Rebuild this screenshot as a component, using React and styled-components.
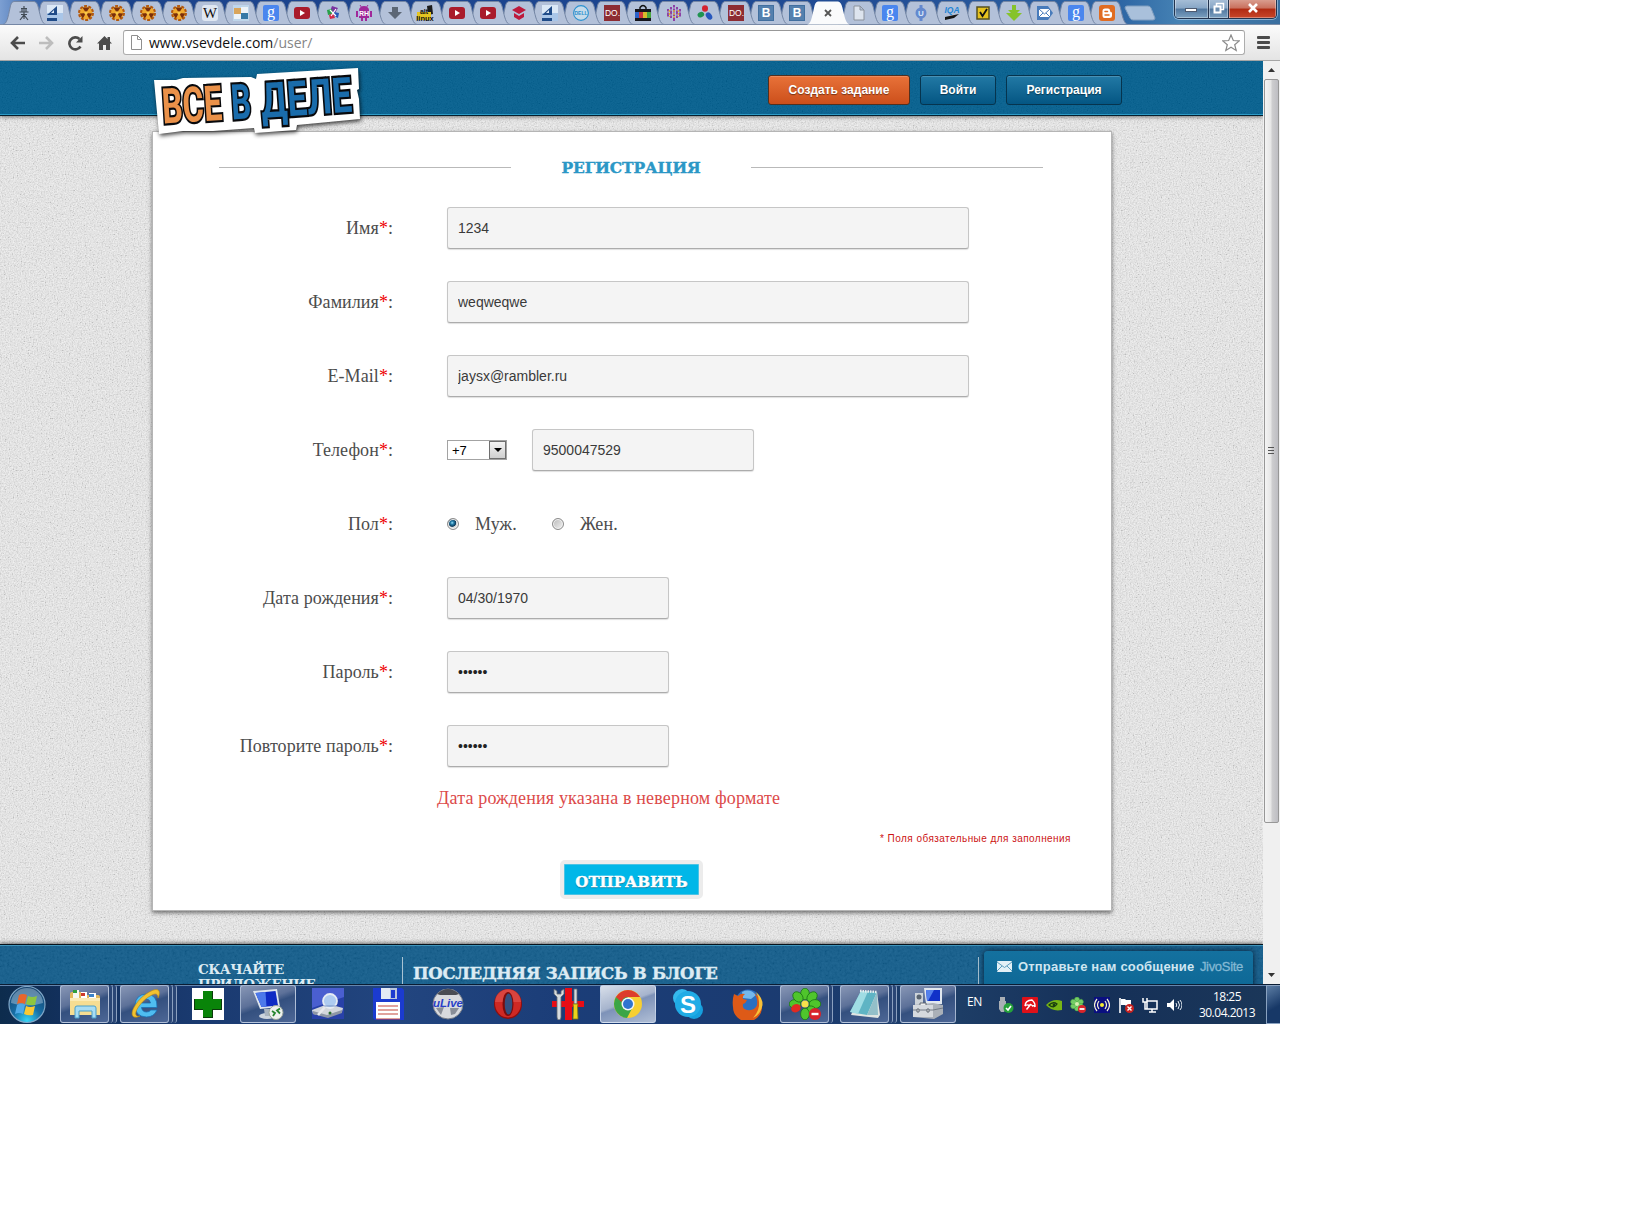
import React from "react";
import styled, { createGlobalStyle, css } from "styled-components";

const noise = (alpha, freq) =>
  `url("data:image/svg+xml,${encodeURIComponent(
    `<svg xmlns='http://www.w3.org/2000/svg' width='320' height='320'><filter id='n' x='0' y='0' width='100%' height='100%'><feTurbulence type='fractalNoise' baseFrequency='${freq}' numOctaves='3' seed='4' stitchTiles='stitch'/><feColorMatrix values='1.6 0 0 0 -.3 1.6 0 0 0 -.3 1.6 0 0 0 -.3 0 0 0 0 ${alpha}'/></filter><rect width='320' height='320' filter='url(#n)'/></svg>`
  )}")`;

const serif = `"Liberation Serif", "Times New Roman", serif`;
const sans = `"Liberation Sans", Arial, sans-serif`;
const slab = `"DejaVu Serif", serif`;
const ui = `"Open Sans", "Noto Sans", sans-serif`;

const GlobalStyle = createGlobalStyle`
  * { box-sizing: border-box; }
  body { margin: 0; background: #fff; }
  svg { display: block; flex: none; }
`;

const Desktop = styled.div`
  width: 1280px;
  height: 1024px;
  display: flex;
  flex-direction: column;
  overflow: hidden;
`;

/* ---------- browser frame ---------- */

const TabStrip = styled.div`
  height: 25px;
  flex: none;
  display: flex;
  padding-left: 8.5px;
  position: relative;
  background: linear-gradient(90deg, #7c9fd2 0, #3c69ae 35px, #1b438c 130px, #1c4590 640px, #234f96 900px, #2e66a4 1120px, #4582b4 1180px, #3a6f9f 1280px);
  box-shadow: inset 0 -1px 0 #7d8da6;
`;

const TabSlot = styled.div`
  width: 30.94px;
  flex: none;
  height: 25px;
  position: relative;
  z-index: ${(p) => p.$z};
  display: flex;
  justify-content: center;
  padding-top: 5px;
`;

const TabShape = styled.svg`
  position: absolute;
  left: -6px;
  top: 0;
  z-index: -1;
  overflow: visible;
`;

const NewTab = styled.svg`
  margin: 5px 0 0 2px;
`;

const WindowControls = styled.div`
  position: absolute;
  right: 3px;
  top: 0;
  width: 103px;
  height: 19px;
  display: flex;
  border: 1px solid #22344f;
  border-top: 0;
  border-radius: 0 0 5px 5px;
  overflow: hidden;
  box-shadow: 0 0 0 1px rgba(200, 225, 245, 0.55);
`;

const ControlButton = styled.div`
  width: ${(p) => p.$w}px;
  display: flex;
  align-items: center;
  justify-content: center;
  padding-bottom: ${(p) => p.$lift || 0}px;
  border-right: ${(p) => (p.$close ? 0 : "1px solid #22344f")};
  box-shadow: inset 1px 0 0 rgba(255, 255, 255, 0.4), inset -1px -1px 0 rgba(255, 255, 255, 0.35);
  background: ${(p) =>
    p.$close
      ? "linear-gradient(#d99c8e 0, #c9705d 45%, #b02a12 50%, #c8462a 100%)"
      : "linear-gradient(#a5bdd6 0, #87a6c6 45%, #50779f 50%, #7ba0c0 100%)"};
`;

const Toolbar = styled.div`
  height: 36px;
  flex: none;
  display: flex;
  align-items: center;
  padding: 0 10px 0 9px;
  background: linear-gradient(#fbfbfb, #e4e4e4);
  border-bottom: 1px solid #a5a5a5;
`;

const NavIcon = styled.svg`
  margin-right: 12px;
`;

const Omnibox = styled.div`
  width: 1122px;
  height: 25px;
  margin-left: -2px;
  display: flex;
  align-items: center;
  padding: 0 4px 0 6px;
  border: 1px solid #adadad;
  border-top-color: #989898;
  border-radius: 3px;
  background: #fff;
`;

const Url = styled.div`
  flex: 1;
  margin-left: 6px;
  font: 14px/22px ${ui};
  color: #111;
  span { color: #858585; }
`;

const MenuBars = styled.div`
  width: 13px;
  height: 13px;
  margin-left: 12px;
  display: flex;
  flex-direction: column;
  justify-content: space-between;
  i { height: 3px; border-radius: 1px; background: #4b4b4b; }
`;

/* ---------- site ---------- */

const Viewport = styled.div`
  height: 923px;
  flex: none;
  display: flex;
`;

const Page = styled.div`
  width: 1263px;
  height: 923px;
  display: flex;
  flex-direction: column;
  overflow: hidden;
  background: ${noise(0.2, 0.75)}, #ececec;
`;

const SiteHeader = styled.header`
  height: 55px;
  flex: none;
  position: relative;
  display: flex;
  justify-content: flex-end;
  align-items: flex-start;
  gap: 10px;
  padding: 14px 141px 0 0;
  background: ${noise(0.06, 0.8)}, #025f8e;
  border-bottom: 1px solid #04202f;
  box-shadow: inset 0 -1px 0 #2c9ac6, 0 1px 4px rgba(0, 0, 0, 0.5);
`;

const Logo = styled.svg`
  position: absolute;
  left: 151px;
  top: 4px;
  z-index: 2;
  overflow: visible;
  filter: drop-shadow(1px 2px 2px rgba(0, 0, 0, 0.75));
`;

const HeaderButton = styled.button`
  width: ${(p) => p.$w}px;
  height: 30px;
  padding: 0 0 1px;
  border: 1px solid ${(p) => (p.$primary ? "#52301f" : "#06344e")};
  border-radius: 3px;
  color: #fff;
  font: bold 12px ${sans};
  text-shadow: 0 1px 1px rgba(0, 0, 0, 0.45);
  box-shadow: inset 0 1px 0 rgba(255, 255, 255, 0.18);
  background: ${(p) =>
    p.$primary ? "linear-gradient(#e87239, #cc4f1b)" : "linear-gradient(#2279a5, #045683)"};
`;

const Card = styled.main`
  width: 960px;
  height: 780px;
  flex: none;
  margin: 15px 0 0 152px;
  border: 1px solid #b5b5b5;
  background: #fff;
  box-shadow: 0 2px 4px rgba(0, 0, 0, 0.5);
`;

const Heading = styled.div`
  height: 75px;
  padding: 0 68px 4px 66px;
  display: flex;
  align-items: center;
  justify-content: space-between;
`;

const Rule = styled.div`
  width: 292px;
  height: 1px;
  background: #b9b9b9;
`;

const Title = styled.h1`
  margin: 0;
  font: bold 15.5px/20px ${slab};
  letter-spacing: -0.1px;
  color: #2b97c6;
  -webkit-text-stroke: 0.4px #2b97c6;
`;

const Row = styled.div`
  height: 74px;
  display: flex;
  align-items: flex-start;
`;

const Label = styled.label`
  width: 240px;
  flex: none;
  margin-right: 54px;
  text-align: right;
  font: 18px/42px ${serif};
  letter-spacing: 0.06px;
  white-space: nowrap;
  color: #4c4c4c;
  span { color: #e00; }
`;

const Field = styled.input`
  width: ${(p) => (p.$wide ? 522 : 222)}px;
  height: 42px;
  padding: 0 10px;
  border: 1px solid #c6c6c6;
  border-bottom-color: #acacac;
  border-radius: 3px;
  background: #f4f4f4;
  font: 14px ${sans};
  color: #3a3a3a;
  outline: 0;
  box-shadow: 0 1px 1px rgba(0, 0, 0, 0.13);
  &[type="password"] { color: #222; }
`;

const CodeSelect = styled.div`
  width: 60px;
  height: 20px;
  margin: 11px 25px 0 0;
  display: flex;
  justify-content: space-between;
  border: 1px solid #a3a3a3;
  background: #fff;
  padding-left: 4px;
  font: 13px/19px ${sans};
  color: #000;
`;

const SelectArrow = styled.div`
  width: 17px;
  height: 18px;
  display: flex;
  align-items: center;
  justify-content: center;
  border: 1px solid #6f6f6f;
  background: linear-gradient(#f3f3f3, #cfcfcf);
`;

const RadioOption = styled.div`
  display: flex;
  align-items: center;
  width: 105px;
  height: 42px;
  gap: 16px;
  font: 18px ${serif};
  letter-spacing: 0.15px;
  color: #4c4c4c;
  span { padding-top: 1px; }
`;

const Radio = styled.div`
  width: 12px;
  height: 12px;
  border-radius: 50%;
  border: 1px solid #8b8b8b;
  box-shadow: inset 0 0 0 1px #f4f4f4;
  background: ${(p) =>
    p.$on
      ? "radial-gradient(circle at 42% 38%, #9fe0f7 0, #2580ac 1.6px, #0c3a5a 3.6px, #dcdcdc 4.4px)"
      : "linear-gradient(135deg, #b9b9b9, #f2f2f2)"};
`;

const ErrorText = styled.div`
  height: 41px;
  margin: -12px 0 0 284px;
  font: 18px/22px ${serif};
  letter-spacing: 0.17px;
  color: #dc4a4a;
`;

const Note = styled.div`
  height: 31px;
  padding: 4px 40px 0 0;
  text-align: right;
  font: 10px/14px ${sans};
  letter-spacing: 0.45px;
  color: #cc1313;
`;

const Submit = styled.button`
  display: block;
  width: 143px;
  height: 39px;
  margin: 1px 0 0 407px;
  padding: 5px 0 0;
  border: 4px solid #ececec;
  border-radius: 5px;
  background: #00b7e8;
  box-shadow: inset 0 0 0 1px #4cc3e4;
  color: #fff;
  font: bold 15px/20px ${slab};
  -webkit-text-stroke: 0.4px #fff;
  text-shadow: 0 1px 1px #04678b;
`;

const Footer = styled.footer`
  height: 40px;
  flex: none;
  margin-top: auto;
  display: flex;
  align-items: flex-start;
  overflow: hidden;
  border-top: 1px solid #06121c;
  background: ${noise(0.07, 0.4)}, #105b8b;
  box-shadow: inset 0 1px 0 #3f94bb, 0 -1px 4px rgba(0, 0, 0, 0.55);
  color: #dcebf3;
`;

const FooterApps = styled.div`
  width: 204px;
  margin: 17px 0 0 198px;
  font: bold 13.5px/15px ${slab};
  letter-spacing: -0.6px;
  white-space: pre-line;
`;

const FooterBlog = styled.div`
  width: 577px;
  height: 40px;
  margin-top: 12px;
  padding: 7px 0 0 10px;
  border-left: 1px solid #a8c3d3;
  border-right: 1px solid #a8c3d3;
  font: bold 16.5px/20px ${slab};
  letter-spacing: -0.27px;
  -webkit-text-stroke: 0.4px #dcebf3;
  white-space: nowrap;
`;

const Jivo = styled.div`
  width: 269px;
  height: 40px;
  margin: 6px 0 0 5px;
  padding: 0 10px 9px 13px;
  display: flex;
  align-items: center;
  border-radius: 4px 4px 0 0;
  background: linear-gradient(#14719f, #0d6795);
  box-shadow: 0 0 6px rgba(0, 20, 40, 0.9);
  white-space: nowrap;
  font: bold 13px ${sans};
  color: #cfe6f1;
  b { flex: 1; margin-left: 6px; letter-spacing: 0.18px; }
  em { font-style: normal; font-weight: normal; letter-spacing: -0.3px; color: #84b9d4; -webkit-text-stroke: 0.3px #84b9d4; }
`;

const Scrollbar = styled.div`
  width: 17px;
  display: flex;
  flex-direction: column;
  align-items: flex-start;
  background: #f0f0f0;
`;

const ScrollArrow = styled.div`
  width: 17px;
  height: 18px;
  display: flex;
  align-items: center;
  justify-content: center;
`;

const ScrollTrack = styled.div`
  flex: 1;
  padding-left: 1px;
`;

const Thumb = styled.div`
  width: 15px;
  height: 744px;
  display: flex;
  align-items: center;
  justify-content: center;
  padding: 0 2px 2px 0;
  border: 1px solid #979797;
  border-radius: 2px;
  background: linear-gradient(90deg, #f4f4f4, #e6e6e6 45%, #cdcdcf 55%, #bdbdc2);
`;

/* ---------- taskbar ---------- */

const Taskbar = styled.div`
  height: 40px;
  flex: none;
  display: flex;
  overflow: hidden;
  border-top: 1px solid #0a1c33;
  box-shadow: inset 0 1px 0 #6486ae;
  background: linear-gradient(90deg, #0d2c4d 0, #12305c 60px, #1a3a70 200px, #22457f 400px, #1b3d78 560px, #1b3b70 800px, #1d3d66 960px, #153058 1100px, #1b3759 1280px);
`;

const StartSlot = styled.div`
  width: 60px;
  display: flex;
  padding: 1px 0 0 8px;
`;

const TaskSlot = styled.div`
  width: 60px;
  flex: none;
  display: flex;
`;

const glass = css`
  border: 1px solid rgba(215, 228, 245, 0.65);
  border-radius: 3px;
  background: ${(p) =>
    p.$active
      ? "linear-gradient(160deg, #d8dfea 0, #a6b4cd 45%, #7d92b8 50%, #b1bfd6 100%)"
      : "linear-gradient(160deg, #8796b5 0, #5d7199 40%, #34507f 52%, #4d6796 100%)"};
`;

const TaskButton = styled.div`
  width: ${(p) => (p.$stack ? 49 : 56)}px;
  height: 38px;
  display: flex;
  align-items: center;
  justify-content: center;
  ${(p) => p.$open && glass}
`;

const StackEdge = styled.div`
  width: 4px;
  height: 38px;
  border-right: 1px solid rgba(205, 220, 240, 0.6);
  border-radius: 0 3px 3px 0;
  background: #2a4675;
`;

const Tray = styled.div`
  display: flex;
  align-items: center;
  gap: 8px;
  margin-left: 16px;
`;

const Lang = styled.div`
  width: 15px;
  margin: 9px 0 0 7px;
  font: 12px/16px ${ui};
  letter-spacing: -0.4px;
  color: #fff;
`;

const Clock = styled.div`
  width: 66px;
  margin: 4px 6px 0 12px;
  text-align: center;
  font: 12px/16px ${ui};
  letter-spacing: -0.5px;
  color: #fff;
`;

const ShowDesktop = styled.div`
  width: 14px;
  margin-left: auto;
  border: 1px solid #8aa2c0;
  border-right: 0;
  background: linear-gradient(150deg, #5c7da4, #173867 60%);
`;

/* ---------- drawings ---------- */

const T = (p) => (
  <text textAnchor="middle" fontFamily="Liberation Sans" fontWeight="bold" {...p} />
);

const favicons = {
  stick: <path d="M8 1v13M5 3.500h6M3.500 7h9M6 3v4M10 3v4M5 9.500h6M4 15l4-5 4 5" stroke="#414b55" strokeWidth="1.2" fill="none" />,
  four: <><rect width="16" height="16" fill="#dbe8f6" /><path d="M0 8h16v8H0z" fill="#a9c6e8" /><path d="M10 1v9H0zM0 13h10v3H0z" fill="#1f4b88" /><path d="M7 5v3H4z" fill="#dbe8f6" /></>,
  rad: <><circle cx="8" cy="8" r="6.6" fill="#f0a92e" /><circle cx="8" cy="8" r="7" fill="none" stroke="#b4590f" strokeWidth="2" strokeDasharray="3 1.4" /><path d="M8 8 4.500 2.500h7zM8 8 1.800 8.600l3 5zM8 8l6.200.6-3 5z" fill="#7a2e0c" /><circle cx="8" cy="8" r="1.7" fill="#f9c848" /></>,
  wiki: <><rect width="16" height="16" rx="3" fill="#dfe7f2" /><text x="8" y="13" textAnchor="middle" fontFamily="Liberation Serif" fontSize="14" fill="#111" textLength="14" lengthAdjust="spacingAndGlyphs">W</text></>,
  squares: <><rect width="16" height="16" fill="#bfd6ea" /><path d="M1 3h7v6H1z" fill="#d9a55b" /><path d="M8 8h7v6H8z" fill="#3679a6" /><path d="M8 2h7v6H8zM1 9h7v5H1z" fill="#edf3f8" /></>,
  google: <><rect width="16" height="16" rx="2" fill="#4a86ee" /><text x="8" y="12" textAnchor="middle" fontFamily="Liberation Serif" fontSize="16" fill="#fff">g</text></>,
  tube: <><rect y="2" width="16" height="12" rx="3" fill="#a91b2b" /><path d="M6 5v6l5-3z" fill="#fff" /></>,
  pinwheel: <><path d="m7 1 6 2-3 5-5-2z" fill="#7b33a0" /><path d="m2 5 5-1 1 5-5 1z" fill="#28a04a" /><path d="m9 7 5 1-1 5-4-2z" fill="#2658b8" /><path d="m4 10 4-2 2 5-5 1z" fill="#d52a4a" /><path d="m5 5 6 6M11 4l-5 7" stroke="#fff" strokeWidth="1.2" /></>,
  droid: <><path d="M3 5a5 4 0 0 1 10 0v8H3zM0 6h2v6H0zM14 6h2v6h-2zM5 13h2v3H5zM9 13h2v3H9z" fill="#a0289a" /><path d="m4 0 2 3M12 0l-2 3" stroke="#a0289a" /><T x="8" y="11" fontSize="7" fill="#fff">RH</T></>,
  down: <path d="M5 2h6v5h4l-7 7-7-7h4z" fill="#5c6775" />,
  linux: <><path d="M9 1l5-1 1 9-5 1z" fill="#1c1c1c" /><rect x="-1" y="7" width="14" height="8" fill="#e5c521" /><T x="6" y="9" fontSize="7" fill="#111">alt</T><T x="7" y="15.5" fontSize="7.5" fill="#111">linux</T></>,
  grad: <path d="m1 5 7-4 7 4-7 4zM3 8l5 3 5-3v4l-5 3-5-3z" fill="#bd1a3c" />,
  dell: <><circle cx="8" cy="8" r="7.4" fill="#c6dbea" stroke="#2b91cf" strokeWidth="1.1" /><T x="8" y="10" fontSize="5" fill="#2b91cf">DELL</T></>,
  doo: <><rect width="16" height="16" fill="#8d2c32" /><text x="8.5" y="11" textAnchor="middle" fontFamily="Liberation Sans" fontSize="8.5" fill="#fff">DO.</text></>,
  bag: <><path d="M5 5V2.500q3-4 6 0V5" fill="none" stroke="#111" strokeWidth="1.4" /><path d="M0 4h16v12H0z" fill="#15151c" /><path d="M0 7h4v6H0z" fill="#2b62c9" /><path d="M4 7h4v6H4z" fill="#c9343c" /><path d="M8 7h4v6H8z" fill="#d9b92b" /><path d="M12 7h4v6h-4z" fill="#4aa53d" /></>,
  dots: <><path d="M2 4v8M5 2v12M8 0v16M11 2v12M14 4v8" stroke="#8b3aa3" strokeWidth="1.9" strokeDasharray="2.5 1 4 1" /><path d="M3.500 5v7M8 5v8M12.500 5v7" stroke="#dfb13a" strokeWidth="1.4" strokeDasharray="2 1" /></>,
  petals: <><ellipse cx="8" cy="3.5" rx="3" ry="3.2" fill="#d42330" /><ellipse cx="3.6" cy="9.5" rx="3.4" ry="2.7" fill="#1f9350" transform="rotate(-25 4 9)" /><ellipse cx="12" cy="11" rx="2.8" ry="4" fill="#2757bd" transform="rotate(-35 12 11)" /></>,
  vk: <><rect width="16" height="16" fill="#416f9f" /><rect x="1" y="1" width="14" height="14" fill="#5480ae" /><T x="8" y="12.3" fontSize="12" fill="#fff">B</T></>,
  close: <path d="m5 5 6 6M11 5l-6 6" stroke="#555" strokeWidth="1.8" />,
  page: <path d="M3 1h6l4 4v10H3zM9 1v4h4" fill="#dde4ee" stroke="#8b929c" />,
  u: <><path d="M8 0v16" stroke="#6489ce" strokeWidth="3" /><circle cx="8" cy="8" r="5.5" fill="#6489ce" /><T x="8" y="11" fontSize="8" fill="#dae6f8">U</T></>,
  iqa: <><text x="8" y="7.5" textAnchor="middle" fontFamily="Liberation Sans" fontWeight="bold" fontStyle="italic" fontSize="8.5" fill="#2486d6">IQA</text><path d="m1 12 14-3-5 4-9 2z" fill="#151515" /></>,
  check: <><rect x="2" y="2" width="12" height="12" fill="#e6c21e" stroke="#545021" strokeWidth="1.5" /><path d="m5 7 2.500 4L12 4" fill="none" stroke="#111" strokeWidth="1.8" /></>,
  green: <path d="M6 0h4v5h4l-3 3h5l-8 8-8-8h5L2 5h4z" fill="#86c32b" />,
  mail: <><path d="M0 1h11l5 7-5 7H0z" fill="#477bbb" /><path d="M2 4h11v8H2z" fill="#fff" /><path d="m2 4 5.500 5L13 4M2 12l4-4M13 12 9 8" stroke="#477bbb" fill="none" /></>,
  blogger: <><rect width="16" height="16" rx="3" fill="#e06c22" /><path d="M6 3.500h3q2 0 2 2t2 2V11q0 2-2.500 2H5.500Q3.500 13 3.500 11V6Q3.500 3.500 6 3.500z" fill="#fff" /><path d="M6 6.500h2.500M6 10h4" stroke="#e06c22" strokeWidth="1.5" strokeLinecap="round" /></>,
};

const tabs = [
  "stick", "four", "rad", "rad", "rad", "rad", "wiki", "squares", "google", "tube", "pinwheel", "droid",
  "down", "linux", "tube", "tube", "grad", "four", "dell", "doo", "bag", "dots", "petals", "doo", "vk", "vk",
  "close", "page", "google", "u", "iqa", "check", "green", "mail", "google", "blogger",
];

function Tab({ kind, index }) {
  const active = kind === "close";
  return (
    <TabSlot $z={active ? 50 : 40 - index}>
      <TabShape width="43" height="25">
        <path
          d="M0 24.500C4 24 5 17 7 8Q8 1.500 11 1.500H31Q34 1.500 35.500 8C37.500 17 39 24 43 24.500z"
          fill={active ? "#fafbfc" : "#b3c1d9"}
          stroke={active ? "none" : "#7587a5"}
        />
      </TabShape>
      <svg width="16" height="16" viewBox="0 0 16 16" overflow="visible">{favicons[kind]}</svg>
    </TabSlot>
  );
}

const taskIcons = {
  explorer: (
    <>
      <path d="M1 6q0-2 2-2h9l2 3h15q2 0 2 2v18H1z" fill="#e2b95c" />
      <path d="M4 2h6v8H4z" fill="#f4f7f4" /><path d="M4 2h4v3H4z" fill="#2f9d3c" />
      <path d="M12 4h6v7h-6z" fill="#fff" /><path d="M12 5h4v3h-4z" fill="#cf3a2b" />
      <path d="M20 5h7v6h-7z" fill="#fff" /><path d="M20 6h5v3h-5z" fill="#3b83c9" />
      <path d="M1 10h30v17H1z" fill="#f6dd92" /><path d="M1 10h30v3H1z" fill="#fbebb5" />
      <path d="M6 30V20q0-2 2-2h17q2 0 2 2v10h-4v-7H10v7z" fill="#a6dcf4" stroke="#4a9fc9" />
    </>
  ),
  ie: (
    <>
      <path d="M28 19.500H12.500q.8 4.500 5 4.500 3 0 4.300-2H28Q25 29 17.500 29 6 28.500 6 17.500 6.500 6.500 17.500 6 28.500 6.500 28 19.500zM12.500 15h9q-.6-4-4.500-4-3.800 0-4.500 4z" fill="#4fbdf0" stroke="#1b6fb3" strokeWidth=".8" fillRule="evenodd" />
      <path d="M5 29C-1 26 8 12 17 6c6-4 11-6 13-3 1 2 0 5-1 7 0-4-2-5-6-3C14 11 5 23 7 27q1 2 4 1-3 2-6 1z" fill="#f2c230" stroke="#b98512" strokeWidth=".6" />
    </>
  ),
  cross: <><rect width="32" height="32" fill="#fff" /><path d="M11 3h10v8h9v11h-9v8H11v-8H2V11h9z" fill="#0b3a0b" /><path d="M11 3h9v8h9v10h-9v8h-9v-8H3V11h8z" fill="#098409" /></>,
  remote: (
    <>
      <ellipse cx="15" cy="28" rx="8" ry="3" fill="#cdd5dd" /><path d="M12 21h6l2 7h-7z" fill="#a9b4bf" />
      <path d="m1 3 24-2 3 18-20 2z" fill="#dfe6ee" /><path d="m3.500 5 20-2 2.500 14.500-16.500 1.500z" fill="#0e2bc4" /><path d="m3.500 5 10-1 1 14.500-5 .5z" fill="#4c79ea" />
      <circle cx="24" cy="24.500" r="7" fill="#eef1ee" stroke="#9aa49a" /><path d="m20 23 3 2-2 3M28 20.500l-3 2 3 3" stroke="#27862f" strokeWidth="1.800" fill="none" />
    </>
  ),
  search: (
    <>
      <rect width="32" height="31" fill="#2841a8" /><path d="M0 0h32v9L0 20z" fill="#4a5fd0" />
      <path d="m0 22 16-6 15 4-1 4-14 5-15-3z" fill="#d2d6dc" /><path d="m1 23 14 4 15-5v3l-14 5-15-4z" fill="#8d96a5" />
      <circle cx="18" cy="13" r="7" fill="#aecbf0" stroke="#e6ecf4" strokeWidth="1.800" /><path d="M12 18h12" stroke="#7893c4" /><path d="m13 19-7 8" stroke="#e6e8ec" strokeWidth="2.600" />
      <circle cx="18" cy="25" r="1.500" fill="#276b2c" />
    </>
  ),
  floppy: (
    <>
      <path d="M1 0h29l2 2v30H3l-2-2z" fill="#1b3bd0" /><path d="M9 0h16v11H9z" fill="#b9c5dc" /><path d="M9 0h9v11H9z" fill="#e3e9f4" /><path d="M19 2h4v8h-4z" fill="#1b3bd0" />
      <path d="M4 14h24v17H4z" fill="#fff" /><path d="M6 18h20M6 22h20M6 26h20M4 31h24" stroke="#c4473d" strokeWidth="1.200" />
    </>
  ),
  ulive: (
    <>
      <circle cx="16" cy="16" r="15" fill="#d8dade" stroke="#777d88" /><path d="M5 6Q16-4 27 6l-3 1H8z" fill="#4a4d54" />
      <path d="m4 20 8-1-3 8zM18 20h9l-4 6-4 1z" fill="#898e98" />
      <text x="1" y="19" fontFamily="Liberation Sans" fontStyle="italic" fontWeight="bold" fontSize="10" fill="#283fc7" textLength="30" lengthAdjust="spacingAndGlyphs">uLive</text>
    </>
  ),
  opera: <><ellipse cx="16" cy="16" rx="14" ry="15" fill="#8f0e0e" /><ellipse cx="16" cy="15.500" rx="13" ry="14" fill="#cf2924" /><path d="M3 14a13 13 0 0 1 26 0z" fill="#e5605a" opacity=".5" /><ellipse cx="16" cy="16" rx="5.500" ry="12" fill="#7b0c0c" /><ellipse cx="16.500" cy="16" rx="3.800" ry="10.500" fill="#34507f" /></>,
  tools: (
    <>
      <path d="M13 0h7v32h-7zM0 13h32v6H0z" fill="#e80c16" />
      <path d="M2 1v5l3 3v20q0 3 2 3t2-3V9l3-3V1L9 3v3H5V3z" fill="#d5dade" stroke="#5f676e" strokeWidth=".8" />
      <path d="M22 1h3v15h-3z" fill="#d5dade" stroke="#5f676e" strokeWidth=".8" /><path d="M21 16h5l-.500 3 .5 12h-5l.5-12z" fill="#e9d31c" stroke="#83760f" strokeWidth=".8" />
    </>
  ),
  chrome: (
    <>
      <circle cx="16" cy="16" r="14" fill="#f7cf32" />
      <path d="M3.900 9A14 14 0 0 0 15 30l6-11.500-5-2.500-5 2z" fill="#3ba546" />
      <path d="M3.900 9 10 19l6-10z" fill="#3ba546" /><path d="M3.900 9A14 14 0 0 1 28.100 9H16q-5 0-6.500 5z" fill="#dd3c2c" />
      <circle cx="16" cy="16" r="6.500" fill="#f3f5f7" /><circle cx="16" cy="16" r="5" fill="#2f74cf" />
    </>
  ),
  skype: <><circle cx="10" cy="10" r="9" fill="#35b9ed" /><circle cx="22" cy="22" r="9" fill="#169fdd" /><circle cx="16" cy="16" r="13" fill="#20ace6" /><T x="16" y="24.500" fontSize="24" fill="#fff">S</T></>,
  firefox: (
    <>
      <circle cx="16" cy="14" r="12.500" fill="#2b6fc0" /><path d="M10 4q8-4 14 3l-5 4-8-1z" fill="#74b8ec" />
      <path d="M2 6q2 1 4 2 3-3 7-2-3 2-2 5l4 1q-1 3-4 4-1 5 4 6 8 1 10-5 1-7-3-12 9 6 8 14A14.500 14.500 0 0 1 1 19Q0 12 2 6z" fill="#de5a17" />
      <path d="M24 4q7 6 6.500 13-1.500 9-9.500 13 7-8 6-16 0-5-3-10z" fill="#f8c138" />
    </>
  ),
  icq: (
    <>
      {[0, 45, 90, 135, 180, 270, 315].map((a) => (
        <ellipse key={a} cx="16" cy="6" rx="4.400" ry="5.800" fill="#4fc52c" stroke="#1a7415" strokeWidth=".8" transform={`rotate(${a} 16 16)`} />
      ))}
      <ellipse cx="16" cy="6" rx="4" ry="5" fill="#e02a22" transform="rotate(245 16 16)" />
      <circle cx="16" cy="16" r="3.600" fill="#f7e14c" /><circle cx="26" cy="26" r="6" fill="#d8232a" /><path d="M22.500 26h7" stroke="#fff" strokeWidth="2.400" />
    </>
  ),
  notepad: <><path d="m12 3 16 1 3 23-2 3-27-3z" fill="#dfe5e2" /><path d="m12 3 16 1-10 23-17-3z" fill="#5fb4c4" /><path d="m12 3 7 .500L9 26l-8-2z" fill="#a0dde4" /><path d="m28 4 1 23-11 0z" fill="#93bfc9" /><path d="m11 3 17 1" stroke="#e9eef0" strokeWidth="2.500" strokeDasharray="1.500 1" /></>,
  toolbox: (
    <>
      <path d="M12 0h18v16H14z" fill="#e1e7ee" /><path d="M14 2h14v11H15z" fill="#1131c8" /><path d="m14 2 8 0-6 11h-1z" fill="#5480ec" />
      <path d="M3 5h8v12H3z" fill="#cdd3d9" /><circle cx="7" cy="9" r="2.500" fill="#5b6570" />
      <path d="m1 17 20-2 10 2v9l-9 5L1 29z" fill="#aab0b8" /><path d="M1 17h20v12L1 29z" fill="#d5d9de" /><path d="M1 22h20l10-2" stroke="#737b85" fill="none" /><path d="M8 17v-2h6v2M5 21h2v3H5zM15 21h2v3h-2z" stroke="#616973" fill="#eee" />
    </>
  ),
};

const tasks = [
  { icon: "explorer", open: true, stack: 2 }, { icon: "ie", open: true, stack: 2 }, { icon: "cross" },
  { icon: "remote", open: true }, { icon: "search" }, { icon: "floppy" }, { icon: "ulive" }, { icon: "opera" },
  { icon: "tools" }, { icon: "chrome", open: true, active: true }, { icon: "skype" }, { icon: "firefox" },
  { icon: "icq", open: true, stack: 1 }, { icon: "notepad", open: true, stack: 2 }, { icon: "toolbox", open: true },
];

const trayIcons = [
  <><path d="M2 0h5v4H2zM1 4h7v8l-2 3H3l-2-3z" fill="#a9afb5" /><circle cx="10.500" cy="11" r="5" fill="#25a23a" /><path d="m8 11 2 2 3-4" stroke="#fff" strokeWidth="1.600" fill="none" /></>,
  <><rect width="16" height="16" rx="1" fill="#df1119" /><path d="M3 9Q3 3.500 10 3q3.500 3 3 7M3 9q2-2 4-.5 2-2 3.500.5 1.500-1 2.500 1M9 7l-4.500 5.500" fill="none" stroke="#fff" strokeWidth="1.400" /></>,
  <><path d="M0 8q7-7 16-4v9Q6 15 0 8z" fill="#77b515" /><path d="M3 8q4-4 8-1-3 5-8 1z" fill="none" stroke="#193d10" strokeWidth="1.300" /><circle cx="8" cy="8" r="1.500" fill="#193d10" /></>,
  <>
    {[0, 60, 120, 180, 240, 300].map((a) => (
      <ellipse key={a} cx="7" cy="3" rx="2.600" ry="3" fill="#74cc66" stroke="#3c9a35" strokeWidth=".4" transform={`rotate(${a} 7 7)`} />
    ))}
    <circle cx="7" cy="7" r="2" fill="#d9f0b0" /><circle cx="12" cy="12" r="4" fill="#d9252b" /><path d="M9.500 12h5" stroke="#fff" strokeWidth="1.800" />
  </>,
  <><rect width="16" height="16" fill="#0a0f80" /><circle cx="8" cy="8" r="2" fill="#f4ec33" /><path d="M5 4q-3 4 0 8M11 4q3 4 0 8M3 2q-5 6 0 12M13 2q5 6 0 12" stroke="#f5f5d2" fill="none" strokeWidth="1.200" /></>,
  <><path d="M2 1v15" stroke="#fff" strokeWidth="1.600" /><path d="M3 2h4l1 1h5v6H8L7 8H3z" fill="#fff" /><circle cx="11.500" cy="11.500" r="4.500" fill="#c9201e" /><path d="m9.500 9.500 4 4M13.500 9.500l-4 4" stroke="#fff" strokeWidth="1.400" /></>,
  <><path d="M5 4h10v8H5zM7 15h7M10 12v3M1 1v4h4V1M3 5v7h2" fill="none" stroke="#fff" strokeWidth="1.500" /></>,
  <><path d="M1 6h3l4-4v12l-4-4H1z" fill="#fff" /><path d="M10 6q1.500 2 0 4M12 4q3 4 0 8M14 3q4 5 0 10" stroke="#e9eff5" fill="none" /></>,
];

function LogoLetters() {
  return (
    <g fontFamily="Roboto" fontWeight="bold" stroke="#08090c" strokeWidth="4.5" strokeLinejoin="miter" paintOrder="stroke">
      <text x="12" y="58.500" fill="#ea9149" fontSize="49" textLength="60" lengthAdjust="spacingAndGlyphs" transform="rotate(-3.500 12 58.500)">ВСЕ</text>
      <text x="81" y="54.500" fill="#1a6cab" fontSize="49" textLength="20" lengthAdjust="spacingAndGlyphs" transform="rotate(-3.500 81 54.500)">В</text>
      <text x="111" y="53" fill="#1a6cab" fontSize="49" textLength="91" lengthAdjust="spacingAndGlyphs" transform="rotate(-4 111 53)">ДЕЛЕ</text>
    </g>
  );
}

function FormRow({ label, children }) {
  return (
    <Row>
      <Label>{label}<span>*</span>:</Label>
      {children}
    </Row>
  );
}

export default function App() {
  return (
    <Desktop>
      <GlobalStyle />
      <TabStrip>
        {tabs.map((kind, i) => <Tab key={i} kind={kind} index={i} />)}
        <NewTab width="32" height="16">
          <path d="M1 3Q1 1 3 1H24Q26 1 27 3L31 13Q31 15 29 15H9Q7 15 6 13z" fill="#a9c0db" stroke="#7f9dbf" />
        </NewTab>
        <WindowControls>
          <ControlButton $w={34}><svg width="12" height="6"><rect x=".5" y="2.500" width="11" height="3" fill="#fff" stroke="#4d5a70" /></svg></ControlButton>
          <ControlButton $w={21} $lift={2}>
            <svg width="12" height="12"><path d="M3.500 1.500h7v6h-7z" fill="none" stroke="#fff" strokeWidth="1.500" /><path d="M1.500 4.500h6v6h-6z" fill="#6d8fb1" stroke="#fff" strokeWidth="2" /></svg>
          </ControlButton>
          <ControlButton $w={47} $lift={2} $close><svg width="12" height="10"><path d="m2 1 8 8M10 1 2 9" stroke="#fff" strokeWidth="2.600" /></svg></ControlButton>
        </WindowControls>
      </TabStrip>

      <Toolbar>
        <NavIcon width="17" height="16"><path d="M16 8H3M9 2 3 8l6 6" fill="none" stroke="#4c4c4c" strokeWidth="2.600" /></NavIcon>
        <NavIcon width="17" height="16"><path d="M1 8h13M8 2l6 6-6 6" fill="none" stroke="#bdbdbd" strokeWidth="2.600" /></NavIcon>
        <NavIcon width="17" height="16"><path d="M13.500 11.500A6 6 0 1 1 12.500 4" fill="none" stroke="#4c4c4c" strokeWidth="2.600" /><path d="M15.500 1v6.500H9z" fill="#4c4c4c" /></NavIcon>
        <NavIcon width="17" height="16"><path d="M1 8.500 8.500 1l3 3V2h2.500v4.500L16 8.500h-2V15h-4v-5H7v5H3V8.500z" fill="#4c4c4c" /></NavIcon>
        <Omnibox>
          <svg width="13" height="16"><path d="M1.500.5h6l4 4v10h-10zM7.500.5v4h4" fill="#fff" stroke="#8f8f8f" /></svg>
          <Url>www.vsevdele.com<span>/user/</span></Url>
          <svg width="18" height="18" viewBox="0 0 18 18"><path d="m9 1 2.300 5.500 5.900.4-4.500 3.800 1.500 5.800L9 13.300l-5.200 3.200 1.500-5.800L.8 6.900l5.900-.4z" fill="#fff" stroke="#8a8a8a" strokeWidth="1.200" /></svg>
        </Omnibox>
        <MenuBars><i /><i /><i /></MenuBars>
      </Toolbar>

      <Viewport>
        <Page>
          <SiteHeader>
            <Logo width="212" height="72">
              <path d="M3 15 25 15 32 13 100 12 105 14 106 9 207 3 208 24 206 25 208 34 209 54 146 60 145 65 104 68 103 63 62 66 32 66 8 69z" fill="#fff" />
              <LogoLetters />
            </Logo>
            <HeaderButton $w={142} $primary>Создать задание</HeaderButton>
            <HeaderButton $w={76}>Войти</HeaderButton>
            <HeaderButton $w={116}>Регистрация</HeaderButton>
          </SiteHeader>

          <Card>
            <Heading><Rule /><Title>РЕГИСТРАЦИЯ</Title><Rule /></Heading>
            <FormRow label="Имя"><Field $wide defaultValue="1234" /></FormRow>
            <FormRow label="Фамилия"><Field $wide defaultValue="weqweqwe" /></FormRow>
            <FormRow label="E-Mail"><Field $wide defaultValue="jaysx@rambler.ru" /></FormRow>
            <FormRow label="Телефон">
              <CodeSelect>+7<SelectArrow><svg width="8" height="4"><path d="M0 0h8L4 4z" /></svg></SelectArrow></CodeSelect>
              <Field defaultValue="9500047529" />
            </FormRow>
            <FormRow label="Пол">
              <RadioOption><Radio $on /><span>Муж.</span></RadioOption>
              <RadioOption><Radio /><span>Жен.</span></RadioOption>
            </FormRow>
            <FormRow label="Дата рождения"><Field defaultValue="04/30/1970" /></FormRow>
            <FormRow label="Пароль"><Field type="password" defaultValue="123456" /></FormRow>
            <FormRow label="Повторите пароль"><Field type="password" defaultValue="123456" /></FormRow>
            <ErrorText>Дата рождения указана в неверном формате</ErrorText>
            <Note>* Поля обязательные для заполнения</Note>
            <Submit>ОТПРАВИТЬ</Submit>
          </Card>

          <Footer>
            <FooterApps>{"СКАЧАЙТЕ\nПРИЛОЖЕНИЕ"}</FooterApps>
            <FooterBlog>ПОСЛЕДНЯЯ ЗАПИСЬ В БЛОГЕ</FooterBlog>
            <Jivo>
              <svg width="15" height="11"><rect width="15" height="11" rx="1" fill="#e3f0f6" /><path d="m0 1 7.500 5.500L15 1M0 10l5-5M15 10l-5-5" fill="none" stroke="#5b9dbd" /></svg>
              <b>Отправьте нам сообщение</b><em>JivoSite</em>
            </Jivo>
          </Footer>
        </Page>
        <Scrollbar>
          <ScrollArrow><svg width="7" height="4"><path d="M0 4h7L3.500 0z" fill="#333" /></svg></ScrollArrow>
          <ScrollTrack>
            <Thumb><svg width="8" height="9"><path d="M1 1.500h6M1 4.500h6M1 7.500h6" stroke="#555" /></svg></Thumb>
          </ScrollTrack>
          <ScrollArrow><svg width="7" height="4"><path d="M0 0h7L3.500 4z" fill="#333" /></svg></ScrollArrow>
        </Scrollbar>
      </Viewport>

      <Taskbar>
        <StartSlot>
          <svg width="38" height="38">
            <defs>
              <radialGradient id="orb" cx=".5" cy=".95" r=".9"><stop offset="0" stopColor="#36d5f5" /><stop offset=".45" stopColor="#176fa6" /><stop offset="1" stopColor="#16426d" /></radialGradient>
            </defs>
            <circle cx="19" cy="18.500" r="18" fill="url(#orb)" stroke="#7fa6c6" strokeWidth="1.200" />
            <path d="M3 17A16 15 0 0 1 35 17Q19 22 3 17z" fill="#b7d2e6" opacity=".45" />
            <path d="M11 9q4-2 8 0l-2 9q-4-2-8 0z" fill="#e9662c" /><path d="M20 10q4 2 9 0l-2 9q-5 1-9-1z" fill="#8ec63f" />
            <path d="M9 19q4-2 8 0l-2 9q-4-2-8 0z" fill="#4fa9e8" /><path d="M18 20q4 2 9 0l-2 9q-5 1-9-1z" fill="#fbc932" />
          </svg>
        </StartSlot>
        {tasks.map((t) => (
          <TaskSlot key={t.icon}>
            <TaskButton $open={t.open} $stack={t.stack} $active={t.active}>
              <svg width="32" height="32" viewBox="0 0 32 32">{taskIcons[t.icon]}</svg>
            </TaskButton>
            {Array.from({ length: t.stack || 0 }, (_, i) => <StackEdge key={i} />)}
          </TaskSlot>
        ))}
        <Lang>EN</Lang>
        <Tray>
          {trayIcons.map((icon, i) => <svg key={i} width="16" height="16" viewBox="0 0 16 16">{icon}</svg>)}
        </Tray>
        <Clock>18:25<br />30.04.2013</Clock>
        <ShowDesktop />
      </Taskbar>
    </Desktop>
  );
}
